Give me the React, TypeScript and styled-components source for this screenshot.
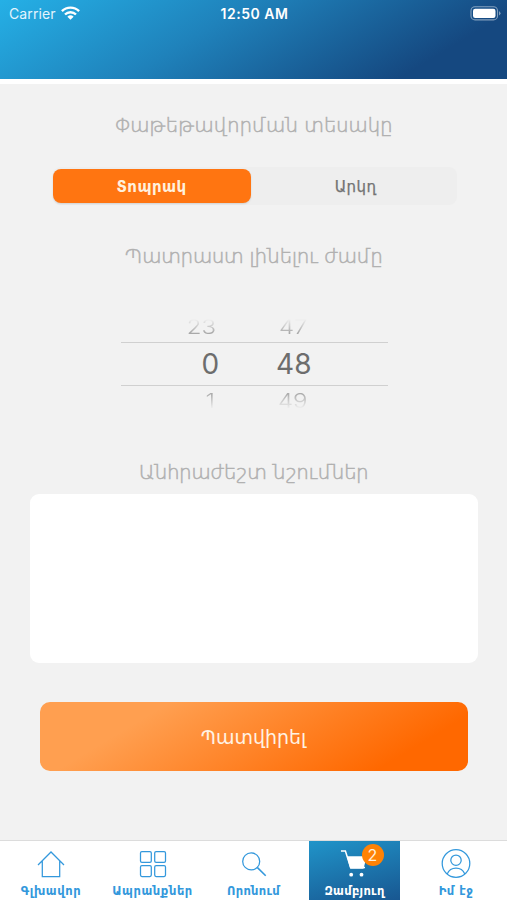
import React from "react";
import styled, { createGlobalStyle } from "styled-components";

const Global = createGlobalStyle`
  * { box-sizing: border-box; }
  body { margin: 0; background: #f2f2f2; }
`;

const armenian = `"DejaVu Sans", sans-serif`;
const latin = `Inter, sans-serif`;

const Screen = styled.div`
  width: 507px;
  height: 900px;
  display: flex;
  flex-direction: column;
  overflow: hidden;
  background: #f2f2f2;
  font-family: ${armenian};
`;

const Header = styled.header`
  height: 84px;
  flex: none;
  border-bottom: 5px solid #fff;
  background: linear-gradient(149deg, #25b0e6 0%, #1f82bb 40%, #154880 83%) padding-box;
`;

const StatusBar = styled.div`
  display: grid;
  grid-template-columns: 1fr auto 1fr;
  align-items: center;
  height: 27px;
  padding: 0 7px 0 9px;
  color: #fff;
  font: 400 14px/27px ${latin};
`;

const Carrier = styled.div`
  display: flex;
  align-items: center;
  gap: 5px;
  color: #e3f4fd;
  letter-spacing: 0.1px;

  svg { margin-top: -2px; }
`;

const Clock = styled.div`
  font-weight: 600;
  letter-spacing: 0.5px;
`;

const BatterySlot = styled.div`
  display: flex;
  justify-content: flex-end;
  margin-right: -1px;
`;

const Main = styled.main`
  flex: 1;
  display: flex;
  flex-direction: column;
  align-items: center;
`;

const Title = styled.h2<{ $top: number; $spacing: number }>`
  margin: ${(p) => p.$top}px 0 0;
  height: 30px;
  font: 200 20px/30px ${armenian};
  letter-spacing: ${(p) => p.$spacing}px;
  color: #b0b0b0;
  -webkit-text-stroke: 0.5px #b0b0b0;
  white-space: nowrap;
`;

const Segments = styled.div`
  display: flex;
  width: 404px;
  height: 38px;
  margin: 27px 0 0 2px;
  padding: 2px 0;
  border-radius: 8px;
  background: #eeeeee;
`;

const Segment = styled.button<{ $active?: boolean }>`
  width: ${(p) => (p.$active ? 198 : 206)}px;
  height: 34px;
  border: 0;
  padding: ${(p) => (p.$active ? "2px 0 0" : "2px 0 0 4px")};
  border-radius: 8px;
  background: ${(p) => (p.$active ? "#ff7511" : "transparent")};
  box-shadow: ${(p) => (p.$active ? "0 1px 2px #0000001f" : "none")};
  color: ${(p) => (p.$active ? "#fff0dc" : "#737373")};
  font: ${(p) => (p.$active ? 700 : 400)} 15px/32px ${armenian};
  letter-spacing: 0.4px;
  -webkit-text-stroke: ${(p) => (p.$active ? 0 : 0.25)}px #737373;
`;

const Picker = styled.div`
  width: 267px;
  height: 96px;
  margin: 47px 0 0 1px;
  font-family: ${latin};
`;

const PickerRow = styled.div<{ $kind: "before" | "current" | "after" }>`
  display: flex;
  justify-content: flex-end;
  gap: ${(p) => (p.$kind === "current" ? 57 : 63)}px;
  height: ${(p) => ({ before: 24, current: 44, after: 28 })[p.$kind]}px;
  padding-right: ${(p) => (p.$kind === "current" ? 76 : 80)}px;
  border: solid #d0d0d0;
  border-width: ${(p) => (p.$kind === "current" ? "1px 0" : "0")};
  font-size: ${(p) => (p.$kind === "current" ? 28 : 24)}px;
  font-weight: ${(p) => (p.$kind === "current" ? 400 : 300)};
  line-height: ${(p) => ({ before: 18, current: 42, after: 29 })[p.$kind]}px;
  color: ${(p) => (p.$kind === "current" ? "#6d6d6d" : "#a9a9a9")};
  mask-image: ${(p) =>
    p.$kind === "before"
      ? "linear-gradient(transparent 1px, #000 15px)"
      : p.$kind === "after"
        ? "linear-gradient(#000 7px, transparent 23px)"
        : "none"};
`;

const Digits = styled.span<{ $edge?: boolean }>`
  transform: ${(p) => (p.$edge ? "scaleY(0.85)" : "none")};
`;

const Notes = styled.textarea`
  width: 448px;
  height: 169px;
  margin: 7px 0 0 1px;
  border: 0;
  border-radius: 9px;
  background: #fff;
  resize: none;
`;

const Submit = styled.button`
  width: 428px;
  height: 69px;
  margin-top: 39px;
  padding: 2px 0 0;
  border: 0;
  border-radius: 10px;
  background: linear-gradient(149deg, #ff9f50 0%, #ff9f50 24%, #ff6800 83%, #ff6800 100%);
  color: #fff2e3;
  font: 400 19px/67px ${armenian};
`;

const TabBar = styled.nav`
  flex: none;
  height: 60px;
  display: grid;
  grid-template-columns: 102px 101px 101px 101px 102px;
  border-top: 1px solid #dcdcdc;
  background: #fff;
`;

const Tab = styled.a<{ $active?: boolean }>`
  display: flex;
  flex-direction: column;
  align-items: center;
  margin-left: ${(p) => (p.$active ? 5 : 0)}px;
  width: ${(p) => (p.$active ? "91px" : "auto")};
  padding-top: 6px;
  color: ${(p) => (p.$active ? "#fff" : "#3398dc")};
  background: ${(p) => (p.$active ? "linear-gradient(165deg, #2094c9, #185791)" : "transparent")};
`;

const TabIcon = styled.div`
  position: relative;
  height: 33px;
  display: flex;
  align-items: center;
`;

const TabLabel = styled.span<{ $spacing: number }>`
  margin-top: 2px;
  font: 700 11.5px/18px ${armenian};
  letter-spacing: ${(p) => p.$spacing}px;
  white-space: nowrap;
`;

const Badge = styled.span`
  position: absolute;
  top: -3px;
  left: 23px;
  width: 22px;
  height: 22px;
  border-radius: 50%;
  background: #ff8205;
  color: #fff0dc;
  text-align: center;
  font: 400 16px/22px ${latin};
`;

const line = { fill: "none", stroke: "currentColor", strokeWidth: 1.25 } as const;

const Wifi = () => (
  <svg width="19" height="14" viewBox="0 0 19 14" fill="none" stroke="#fff" strokeWidth="2.4">
    <path d="M.9 5.1a12.3 12.3 0 0 1 17.2 0M4 8.5a7.8 7.8 0 0 1 11 0" />
    <path d="M9.5 13.8 6.4 10.7a4.5 4.5 0 0 1 6.2 0Z" fill="#fff" stroke="none" />
  </svg>
);

const Battery = () => (
  <svg width="31" height="15" viewBox="0 0 31 15">
    <rect x="1" y=".7" width="26.5" height="13.2" rx="4" fill="none" stroke="#ffffff77" strokeWidth="1.1" />
    <rect x="3" y="2.7" width="22.5" height="9.2" rx="2.2" fill="#fff" />
    <path d="M29 5q3 2.3 0 4.6Z" fill="#ffffff77" />
  </svg>
);

const Home = () => (
  <svg width="28" height="28" viewBox="0 0 28 28" {...line}>
    <path d="M1 15 14 2l13 13M5.3 11v15.5h17.4V11" />
  </svg>
);

const Products = () => (
  <svg width="28" height="28" viewBox="0 0 28 28" {...line}>
    <rect x="1.5" y="1.5" width="10.8" height="10.8" rx="1.4" />
    <rect x="15.7" y="1.5" width="10.8" height="10.8" rx="1.4" />
    <rect x="1.5" y="15.7" width="10.8" height="10.8" rx="1.4" />
    <rect x="15.7" y="15.7" width="10.8" height="10.8" rx="1.4" />
  </svg>
);

const Search = () => (
  <svg width="28" height="28" viewBox="0 0 28 28" {...line}>
    <circle cx="11.2" cy="11.4" r="8.5" />
    <path d="m17.2 17.4 8.5 8.4" strokeWidth="1.6" />
  </svg>
);

const Cart = () => (
  <svg width="32" height="30" viewBox="0 0 32 30">
    <path d="M2 2h4.4l5.2 16.5h14.4" fill="none" stroke="#fff" strokeWidth="1.5" />
    <path d="M7.8 7.2h20l-3.3 12.5H11.3Z" fill="#fff" />
    <circle cx="12.2" cy="25.7" r="1.9" fill="#fff" />
    <circle cx="22.5" cy="25.7" r="1.9" fill="#fff" />
  </svg>
);

const Profile = () => (
  <svg width="30" height="30" viewBox="0 0 30 30" {...line}>
    <circle cx="15" cy="14.5" r="13.8" />
    <circle cx="15" cy="11.2" r="5.2" />
    <path d="M6.2 24.9a9.6 9.6 0 0 1 17.6 0" />
  </svg>
);

export default function App() {
  return (
    <Screen>
      <Global />
      <Header>
        <StatusBar>
          <Carrier>Carrier <Wifi /></Carrier>
          <Clock>12:50 AM</Clock>
          <BatterySlot><Battery /></BatterySlot>
        </StatusBar>
      </Header>
      <Main>
        <Title $top={26} $spacing={-0.32}>Փաթեթավորման տեսակը</Title>
        <Segments>
          <Segment $active>Տոպրակ</Segment>
          <Segment>Արկղ</Segment>
        </Segments>
        <Title $top={36} $spacing={-0.48}>Պատրաստ լինելու ժամը</Title>
        <Picker>
          <PickerRow $kind="before"><Digits $edge>23</Digits><Digits $edge>47</Digits></PickerRow>
          <PickerRow $kind="current"><Digits>0</Digits><Digits>48</Digits></PickerRow>
          <PickerRow $kind="after"><Digits $edge>1</Digits><Digits $edge>49</Digits></PickerRow>
        </Picker>
        <Title $top={43} $spacing={-0.52}>Անհրաժեշտ նշումներ</Title>
        <Notes aria-label="Անհրաժեշտ նշումներ" />
        <Submit>Պատվիրել</Submit>
      </Main>
      <TabBar>
        <Tab><TabIcon><Home /></TabIcon><TabLabel $spacing={0.6}>Գլխավոր</TabLabel></Tab>
        <Tab><TabIcon><Products /></TabIcon><TabLabel $spacing={0.6}>Ապրանքներ</TabLabel></Tab>
        <Tab><TabIcon><Search /></TabIcon><TabLabel $spacing={0.3}>Որոնում</TabLabel></Tab>
        <Tab $active><TabIcon><Cart /><Badge>2</Badge></TabIcon><TabLabel $spacing={0.3}>Զամբյուղ</TabLabel></Tab>
        <Tab><TabIcon><Profile /></TabIcon><TabLabel $spacing={0.5}>Իմ էջ</TabLabel></Tab>
      </TabBar>
    </Screen>
  );
}
